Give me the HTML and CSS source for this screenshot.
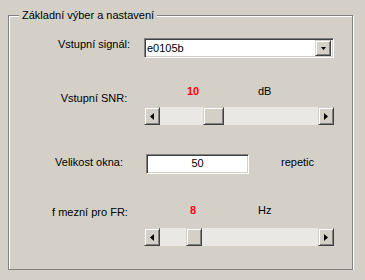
FILE: index.html
```html
<!DOCTYPE html>
<html>
<head>
<meta charset="utf-8">
<link rel="stylesheet" href="styles.css">
</head>
<body>
<div class="page">
  <fieldset class="group">
    <legend class="title">Základní výber a nastavení</legend>

    <div class="row r1">
      <div class="lbl">Vstupní signál:</div>
      <div class="combo">
        <span class="combo-text">e0105b</span>
        <span class="combo-btn"><svg width="5" height="3" viewBox="0 0 5 3"><path d="M0 0H5L2.5 3Z" fill="#000"/></svg></span>
      </div>
    </div>

    <div class="row r2">
      <div class="lbl lbl-mid">Vstupní SNR:</div>
      <div class="ctl">
        <div class="vals"><span class="val">10</span><span class="unit">dB</span></div>
        <div class="slider">
          <span class="sbtn"><svg width="4" height="7" viewBox="0 0 4 7"><path d="M4 0V7L0 3.5Z" fill="#000"/></svg></span>
          <div class="track"><span class="thumb" style="margin-left:43px;width:21px"></span></div>
          <span class="sbtn"><svg width="4" height="7" viewBox="0 0 4 7"><path d="M0 0V7L4 3.5Z" fill="#000"/></svg></span>
        </div>
      </div>
    </div>

    <div class="row r3">
      <div class="lbl lbl-left">Velikost okna:</div>
      <div class="editrow">
        <div class="edit">50</div>
        <span class="unit2">repetic</span>
      </div>
    </div>

    <div class="row r4">
      <div class="lbl lbl-left2">f mezní pro FR:</div>
      <div class="ctl">
        <div class="vals"><span class="val">8</span><span class="unit">Hz</span></div>
        <div class="slider s2">
          <span class="sbtn"><svg width="4" height="7" viewBox="0 0 4 7"><path d="M4 0V7L0 3.5Z" fill="#000"/></svg></span>
          <div class="track"><span class="thumb" style="margin-left:26px;width:16px"></span></div>
          <span class="sbtn"><svg width="4" height="7" viewBox="0 0 4 7"><path d="M0 0V7L4 3.5Z" fill="#000"/></svg></span>
        </div>
      </div>
    </div>
  </fieldset>
</div>
</body>
</html>
```

FILE: styles.css
```css
html, body {
  margin: 0;
  padding: 0;
  background: #d4d0c8;
  font-family: "Liberation Sans", Arial, sans-serif;
  font-size: 11px;
  color: #000;
}

.page {
  padding: 9px 0 0 8px;
}

.group {
  box-sizing: border-box;
  width: 345px;
  height: 261px;
  margin: 0;
  padding: 0;
  border: 1px solid #808080;
  box-shadow: inset 1px 1px 0 #fff, 1px 1px 0 #fff;
}

.title {
  margin-left: 10px;
  padding: 0 3px;
  line-height: 13px;
  background: #d4d0c8;
}

.row {
  display: grid;
  grid-template-columns: 100px 190px;
  padding-left: 35px;
  align-items: start;
}

.lbl {
  text-align: center;
  line-height: 13px;
  white-space: nowrap;
}

.r1 { margin-top: 16px; }
.r2 { margin-top: 27px; }
.r3 { margin-top: 29px; }
.r4 { margin-top: 30px; }

.lbl-mid { margin-top: 7px; }
.lbl-left { margin-top: 2px; padding-right: 10px; }
.lbl-left2 { margin-top: 2px; padding-right: 8px; }

/* combo box */
.combo {
  box-sizing: border-box;
  height: 20px;
  display: flex;
  align-items: center;
  background: #fff;
  border: 1px solid;
  border-color: #808080 #fff #fff #808080;
  box-shadow: inset 1px 1px 0 #404040, inset -1px -1px 0 #d4d0c8;
  padding: 2px 2px 2px 2px;
}

.combo-text {
  flex: 1;
  line-height: 13px;
}

.combo-btn {
  box-sizing: border-box;
  width: 16px;
  height: 16px;
  display: flex;
  align-items: center;
  justify-content: center;
  background: #d4d0c8;
  border: 1px solid;
  border-color: #d4d0c8 #404040 #404040 #d4d0c8;
  box-shadow: inset 1px 1px 0 #fff, inset -1px -1px 0 #808080;
}

/* value labels above sliders */
.vals {
  display: flex;
  line-height: 13px;
  height: 13px;
}

.val {
  width: 30px;
  margin-left: 34px;
  text-align: center;
  color: #ff0000;
  font-weight: bold;
}

.unit {
  margin-left: 50px;
}

/* slider */
.slider {
  display: flex;
  height: 18px;
  margin-top: 9px;
  width: 190px;
}

.s2 { margin-top: 11px; }

.sbtn, .thumb {
  box-sizing: border-box;
  background: #d4d0c8;
  border: 1px solid;
  border-color: #d4d0c8 #404040 #404040 #d4d0c8;
  box-shadow: inset 1px 1px 0 #fff, inset -1px -1px 0 #808080;
}

.sbtn {
  width: 16px;
  height: 18px;
  display: flex;
  align-items: center;
  justify-content: center;
}

.track {
  flex: 1;
  display: flex;
  background: #e9e8e5;
}

.thumb {
  height: 18px;
}

/* edit box */
.editrow {
  display: flex;
  align-items: start;
}

.edit {
  box-sizing: border-box;
  width: 103px;
  height: 20px;
  margin-left: 2px;
  background: #fff;
  border: 1px solid;
  border-color: #808080 #fff #fff #808080;
  box-shadow: inset 1px 1px 0 #404040, inset -1px -1px 0 #d4d0c8;
  text-align: center;
  line-height: 17px;
}

.unit2 {
  margin-left: 32px;
  margin-top: 2px;
  line-height: 13px;
}
```
